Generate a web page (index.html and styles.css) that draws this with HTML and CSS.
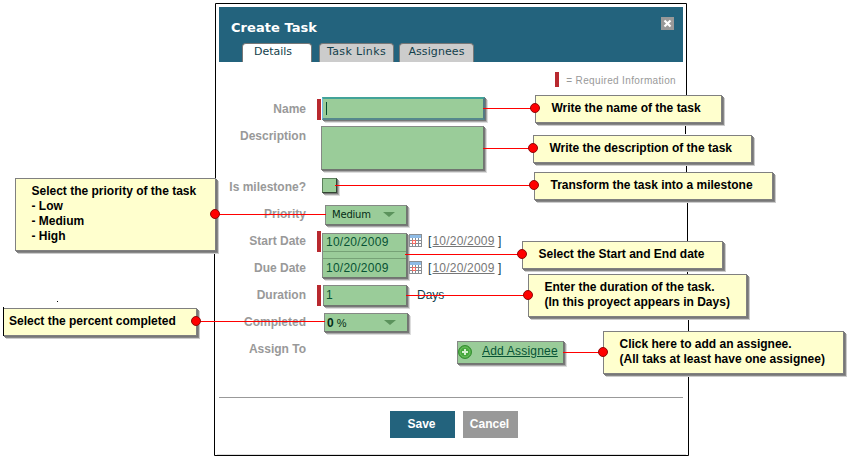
FILE: index.html
```html
<!DOCTYPE html>
<html lang="en">
<head>
<meta charset="utf-8">
<title>Create Task</title>
<link rel="stylesheet" href="styles.css">
</head>
<body>
<main class="dialog">
  <header class="header">
    <div class="titlebar">
      <h1 class="title">Create Task</h1>
      <button class="close" aria-label="Close"><svg width="13" height="13" viewBox="0 0 13 13"><path d="M3.5 3.5l6 6M9.500 3.500l-6 6" stroke="#fff" stroke-width="2.200"/></svg></button>
    </div>
    <nav class="tabs">
      <span class="tab active">Details</span>
      <span class="tab links">Task Links</span>
      <span class="tab assignees">Assignees</span>
    </nav>
  </header>
  <div class="legend"><i class="legend-bar"></i><span>= Required Information</span></div>
  <section class="form">
    <div class="row"><label>Name</label><i class="req low"></i><div class="field name"><i class="caret"></i></div></div>
    <div class="row tall"><label>Description</label><i></i><div class="field description"></div></div>
    <div class="row"><label class="milestone">Is milestone?</label><i></i><div class="field check"></div></div>
    <div class="row"><label>Priority</label><i></i><div class="field priority"><span>Medium</span><i class="arrow"></i></div></div>
    <div class="dates">
      <div class="labels"><label>Start Date</label><label>Due Date</label></div>
      <i class="req start"></i>
      <div class="field range"><span class="date">10/20/2009</span><span class="date second">10/20/2009</span></div>
      <div class="pickers">
        <div class="picker"><svg class="cal" width="13" height="13"><use href="#calendar"/></svg><span>[<a>10/20/2009</a> ]</span></div>
        <div class="picker"><svg class="cal" width="13" height="13"><use href="#calendar"/></svg><span>[<a>10/20/2009</a> ]</span></div>
      </div>
    </div>
    <div class="row"><label>Duration</label><i class="req"></i><div class="field duration">1</div><span class="days">Days</span></div>
    <div class="row"><label>Completed</label><i></i><div class="field completed"><span><b>0</b> %</span><i class="arrow"></i></div></div>
    <div class="row"><label>Assign To</label><i></i><div class="field add"><svg width="14" height="14" viewBox="0 0 14 14"><circle cx="7" cy="7" r="6.500" fill="#46a83c" stroke="#368f32"/><circle cx="7" cy="7" r="5" fill="none" stroke="#70bd65"/><path d="M7 4v6M4 7h6" stroke="#d6f0d0" stroke-width="2"/></svg><a>Add Assignee</a></div></div>
  </section>
  <footer class="footer"><button class="save">Save</button><button class="cancel">Cancel</button></footer>
</main>

<svg class="overlay" width="850" height="459" viewBox="0 0 850 459">
  <defs>
    <symbol id="calendar" viewBox="0 0 13 13">
      <path d="M0 0h13v13H0z" fill="#8b8f94"/><path d="M1 1h11v3H1z" fill="#8fbce6"/><path d="M1 4h11v8H1z" fill="#fff"/>
      <path d="M1 6.500h11M1 9.500h11M3.500 4v8M6.500 4v8M9.500 4v8" stroke="#858b92"/><path d="M3 6h4v4H3z" fill="#f46b62"/><path d="M4 7h2v2H4z" fill="#fff0ee"/>
    </symbol>
  </defs>
  <path class="frame" d="M215.500 180V3.500H686.500V96M685.500 123V134M686.500 163V173M687.500 200V275M688.500 317V455.500H214.500V251"/>
  <path class="edge" d="M217 454.500H686"/>
</svg>

<aside class="callout c-name">Write the name of the task</aside>
<aside class="callout c-desc">Write the description of the task</aside>
<aside class="callout c-mile">Transform the task into a milestone</aside>
<aside class="callout c-prio">Select the priority of the task<br>- Low<br>- Medium<br>- High</aside>
<aside class="callout c-date">Select the Start and End date</aside>
<aside class="callout c-dura">Enter the duration of the task.<br>(In this proyect appears in Days)</aside>
<aside class="callout c-comp">Select the percent completed</aside>
<aside class="callout c-assi">Click here to add an assignee.<br>(All taks at least have one assignee)</aside>

<svg class="overlay" width="850" height="459" viewBox="0 0 850 459">
  <path class="leader" d="M483 108.500H535M483 148.500H533M335 185.500H534M215 214.500H326M405 254.500H522M406 295.500H528M563 352.500H603"/>
  <path class="leader" d="M196 321.500H325"/>
  <g class="pins"><circle cx="535" cy="108" r="4.500"/><circle cx="533" cy="148" r="4.500"/><circle cx="534" cy="185" r="4.500"/><circle cx="215" cy="214" r="4.500"/><circle cx="522" cy="254" r="4.500"/><circle cx="528" cy="295" r="4.500"/><circle cx="196" cy="321" r="4.500"/><circle cx="603" cy="352" r="4.500"/></g>
  <path d="M3.500 307V336" stroke="#000"/><path d="M57 301h1v1h-1z"/>
</svg>
</body>
</html>
```
FILE: styles.css
```css
* { box-sizing: border-box; }
body { margin: 0; width: 850px; height: 459px; overflow: hidden; position: relative; background: #fff; font-family: "Liberation Sans", Arial, sans-serif; font-size: 12px; }
button { border: 0; padding: 0; font: inherit; }
.dialog { width: 464px; margin-left: 219px; padding-top: 7px; }
.header { height: 55px; background: #23637d; display: flex; flex-direction: column; justify-content: space-between; }
.titlebar { display: flex; justify-content: space-between; padding: 10px 9px 0 12px; }
.title { margin: 3px 0 0; color: #fff; font: bold 13px/16px "DejaVu Sans", sans-serif; letter-spacing: 0.05px; }
.close { width: 13px; height: 13px; background: #999; }
.close svg { display: block; }
.tabs { display: flex; padding-left: 23px; }
.tab { height: 19px; width: 75px; border: 1px solid #777; border-bottom: 0; border-radius: 4px 4px 0 0; background: #ccc; color: #12404b; font: 11px/16px "DejaVu Sans", sans-serif; text-align: center; white-space: nowrap; }
.tab.active { width: 70px; background: #fff; margin-right: 7px; padding-right: 8px; }
.tab.links { margin-right: 5px; letter-spacing: 0.35px; }
.tab.assignees { letter-spacing: 0.1px; }
.legend { height: 33px; padding: 10px 7px 0 0; display: flex; justify-content: flex-end; gap: 7px; color: #999; font-size: 10px; line-height: 18px; letter-spacing: 0.35px; white-space: nowrap; }
.legend-bar { width: 4px; height: 15px; background: #b8292f; }
.row { height: 27px; display: grid; grid-template-columns: 98px 4px auto 1fr; }
.row.tall { height: 51px; }
label { padding-right: 11px; text-align: right; color: #999; font-weight: bold; line-height: 29px; height: 27px; white-space: nowrap; }
.req { background: #b8292f; height: 21px; margin-top: 4px; }
.field { background: #9acc99; border: 1px solid #858985; border-right-color: #707570; border-bottom-color: #707570; box-shadow: 1px 1px #777, 2px 2px #aaa, 3px 3px #ddd; color: #075334; white-space: nowrap; }
.name { width: 163px; height: 23px; margin: 2px 0 0 1px; padding: 3px 0 0 3px; border: 2px solid #42a398; border-left: 1px solid #72bce6; border-right-color: #537985; border-bottom-color: #56888d; }
.caret { display: block; width: 1px; height: 13px; background: #064c30; }
.description { width: 163px; height: 44px; margin-top: 4px; }
.check { width: 15px; height: 15px; margin: 5px 0 0 1px; border: 1px solid #5c805c; border-right-color: #343; border-bottom-color: #343; }
.priority { width: 82px; height: 20px; margin: 5px 0 0 4px; padding: 0 11px 2px 6px; display: flex; justify-content: space-between; align-items: center; color: #052c17; font: 10px "DejaVu Sans", sans-serif; letter-spacing: -0.2px; }
.arrow { border: 6px solid transparent; border-top: 5px solid #5b925c; border-bottom: 0; }
.dates { height: 54px; display: grid; grid-template-columns: 98px 4px auto 1fr; }
.labels { display: grid; }
.range { width: 85px; height: 45px; margin: 6px 0 0 1px; display: flex; flex-direction: column; justify-content: space-between; }
.date { height: 18px; padding-left: 3px; font-size: 12px; line-height: 16px; letter-spacing: 0.25px; border-bottom: 1px solid #76a276; }
.date.second { height: 19px; line-height: 19px; border-bottom: 0; border-top: 1px solid #76a276; }
.pickers { padding-left: 2px; }
.picker { height: 27px; display: flex; align-items: center; gap: 6px; color: #12404b; font-size: 12px; letter-spacing: 0.15px; white-space: pre; }
.picker a { color: #777; text-decoration: underline; margin-left: 1px; letter-spacing: 0.2px; }
.duration { width: 84px; height: 21px; margin: 4px 0 0 2px; padding-left: 2px; font-size: 12px; line-height: 19px; }
.days { padding-left: 10px; line-height: 28px; color: #12404b; }
.completed { width: 84px; height: 19px; margin: 5px 0 0 3px; padding: 0 11px 0 2px; display: flex; align-items: center; justify-content: space-between; font-size: 11px; color: #052c17; }
.completed b { font-size: 12px; }
.add { width: 107px; height: 23px; margin: 6px 0 0 136px; display: flex; align-items: center; gap: 10px; }
.add svg { flex: none; margin-top: -2px; }
.add a { margin-top: -3px; text-decoration: underline; letter-spacing: 0.2px; }
.footer { margin-top: 35px; border-top: 1px solid #999; padding-top: 13px; display: flex; padding-left: 171px; gap: 8px; }
.footer button { height: 27px; color: #fff; font-weight: bold; }
.save { width: 65px; background: #23637d; }
.cancel { width: 55px; background: #999; }
.footer .save, .footer .cancel { padding: 0 2px 2px 0; }
.overlay { position: absolute; left: 0; top: 0; pointer-events: none; }
.frame { fill: none; stroke: #000; }
.edge { stroke: #ddd; }
.leader { fill: none; stroke: #f00; }
.pins { fill: #f00; stroke: #8f0808; stroke-width: 1; }
.callout { position: absolute; background: #ffffce; border: 1px solid #808080; box-shadow: 1px 1px #777, 2px 2px #888, 3px 3px #ccc; color: #000; font-weight: bold; line-height: 15px; padding: 5px 0 0 15.500px; white-space: nowrap; }
.c-name { left: 535px; top: 95px; width: 187px; height: 28px; }
.c-desc { left: 533px; top: 135px; width: 219px; height: 28px; }
.c-mile { left: 534px; top: 172px; width: 239px; height: 28px; }
.c-prio { left: 15px; top: 178px; width: 201px; height: 73px; }
.c-date { left: 522px; top: 241px; width: 201px; height: 28px; }
.c-dura { left: 528px; top: 274px; width: 219px; height: 43px; }
.c-comp { left: 3px; top: 308px; width: 194px; height: 28px; padding-left: 5px; }
.c-assi { left: 603px; top: 331px; width: 241px; height: 43px; }
```
